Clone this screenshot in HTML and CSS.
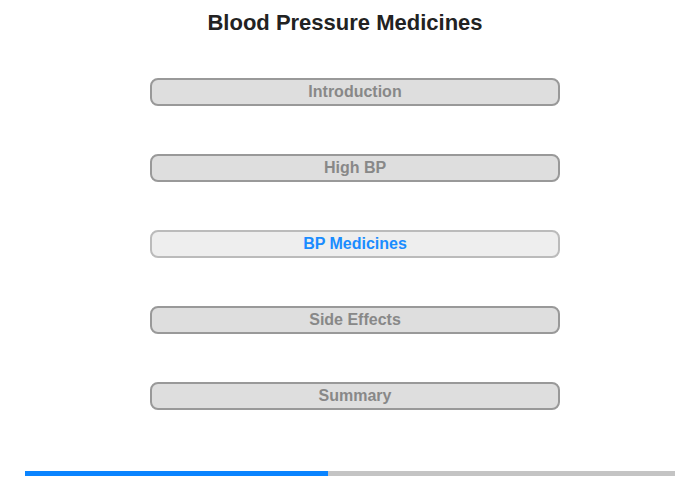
FILE: index.html
```html
<!DOCTYPE html>
<html lang="en">
<head>
    <meta charset="UTF-8">
    <title>Blood Pressure Medicines</title>
    <link rel="stylesheet" href="styles.css">
</head>
<body>
    <div class="page">
        <h1 class="title">Blood Pressure Medicines</h1>

        <nav class="menu">
            <button class="menu-item">Introduction</button>
            <button class="menu-item">High BP</button>
            <button class="menu-item active">BP Medicines</button>
            <button class="menu-item">Side Effects</button>
            <button class="menu-item">Summary</button>
        </nav>

        <div class="progress">
            <div class="progress-fill" style="width: 46.6%"></div>
        </div>
    </div>
</body>
</html>
```

FILE: styles.css
```css
* {
    margin: 0;
    padding: 0;
    box-sizing: border-box;
    font-family: 'Liberation Sans', Arial, sans-serif;
}

body {
    background-color: #fff;
    width: 700px;
    height: 480px;
    overflow: hidden;
}

.page {
    display: flex;
    flex-direction: column;
    align-items: center;
    height: 480px;
}

.title {
    font-size: 22px;
    font-weight: bold;
    color: #222;
    margin-top: 11px;
    line-height: 23px;
    margin-right: 10px;
}

.menu {
    display: flex;
    flex-direction: column;
    gap: 48px;
    margin-top: 44px;
    margin-left: 10px;
}

.menu-item {
    width: 410px;
    height: 28px;
    background-color: #dedede;
    border: 2px solid #999;
    border-radius: 8px;
    color: #888;
    font-size: 16px;
    font-weight: bold;
    cursor: pointer;
}

.menu-item.active {
    background-color: #eee;
    border-color: #bbb;
    color: #1a8cff;
}

.progress {
    margin-top: auto;
    margin-bottom: 4px;
    width: 650px;
    height: 5px;
    background-color: #c4c4c4;
}

.progress-fill {
    height: 100%;
    background-color: #0a84ff;
}
```
